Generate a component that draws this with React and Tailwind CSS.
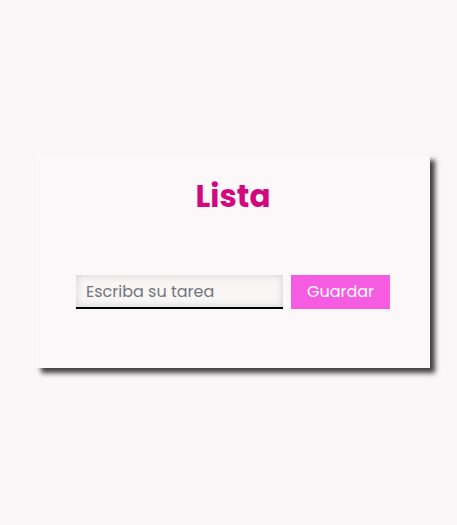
export default function App() {
  return (
    <div className="min-h-[525px] w-[457px] bg-[#fbf7f8] pt-[155px] pl-[36px]" style={{ fontFamily: "Poppins, Inter, 'Noto Sans', sans-serif" }}>
      <div className="w-[394px] h-[213px] bg-[#fcf8f9] shadow-[5px_5px_5px_#3f3f3f] flex flex-col items-center">
        <h1 className="mt-[21px] text-[31px] leading-[40px] font-bold text-[#d1087e]">Lista</h1>
        <div className="mt-[59px] flex gap-[8px]">
          <input
            type="text"
            placeholder="Escriba su tarea"
            className="w-[207px] h-[34px] pl-[10px] bg-[#f9f6f6] border-b-2 border-black shadow-[inset_0_0_8px_#cfcfcf] text-[16px] outline-none placeholder:text-[#757580]"
          />
          <button className="w-[99px] h-[34px] bg-[#f55ce2] text-white text-[16px]">Guardar</button>
        </div>
      </div>
    </div>
  );
}
